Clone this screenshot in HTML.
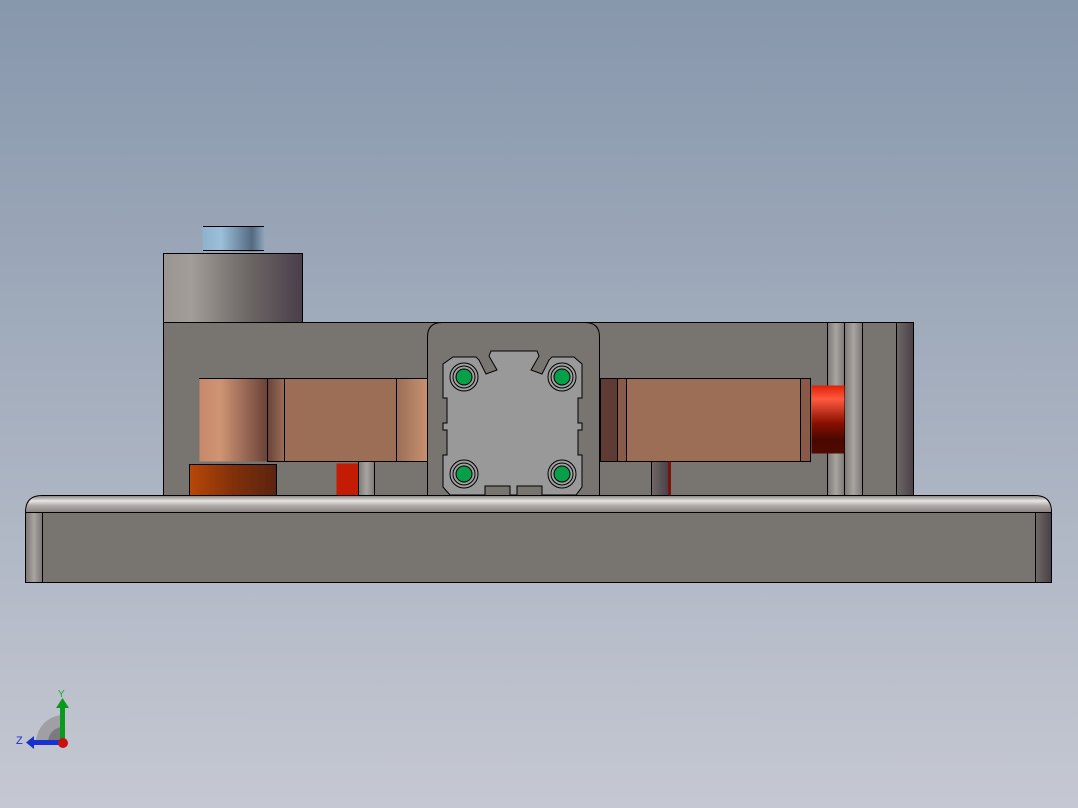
<!DOCTYPE html>
<html><head><meta charset="utf-8"><style>html,body{margin:0;padding:0;width:1078px;height:808px;overflow:hidden}</style></head>
<body>
<svg width="1078" height="808" viewBox="0 0 1078 808" xmlns="http://www.w3.org/2000/svg">
<defs>
<linearGradient id="bg" x1="0" y1="0" x2="0" y2="1"><stop offset="0" stop-color="#8797ac"/><stop offset="1" stop-color="#c5c8d2"/></linearGradient>
<linearGradient id="cyl" x1="0" x2="1"><stop offset="0" stop-color="#9a9591"/><stop offset=".2" stop-color="#a29d98"/><stop offset=".6" stop-color="#6e6866"/><stop offset="1" stop-color="#4a3e4a"/></linearGradient>
<linearGradient id="blue" x1="0" x2="1"><stop offset="0" stop-color="#8fb2cc"/><stop offset=".3" stop-color="#9bbfda"/><stop offset=".8" stop-color="#546a82"/><stop offset="1" stop-color="#8fa6bb"/></linearGradient>
<linearGradient id="cop1" x1="0" x2="1"><stop offset="0" stop-color="#c68a6a"/><stop offset=".3" stop-color="#d09474"/><stop offset="1" stop-color="#6a4238"/></linearGradient>
<linearGradient id="cop2" x1="0" x2="1"><stop offset="0" stop-color="#9b6e55"/><stop offset="1" stop-color="#c89170"/></linearGradient>
<linearGradient id="cop3" x1="0" x2="1"><stop offset="0" stop-color="#6a4238"/><stop offset="1" stop-color="#9b6e55"/></linearGradient>
<linearGradient id="org" x1="0" x2="1"><stop offset="0" stop-color="#b84808"/><stop offset=".5" stop-color="#82300a"/><stop offset="1" stop-color="#5a2410"/></linearGradient>
<linearGradient id="red" x1="0" y1="0" x2="0" y2="1"><stop offset="0" stop-color="#e02008"/><stop offset=".2" stop-color="#ff5a40"/><stop offset=".55" stop-color="#8a1000"/><stop offset=".8" stop-color="#480800"/><stop offset="1" stop-color="#500a00"/></linearGradient>
<linearGradient id="rod" x1="0" x2="1"><stop offset="0" stop-color="#7d7875"/><stop offset=".5" stop-color="#a8a4a0"/><stop offset="1" stop-color="#7d7875"/></linearGradient>
<linearGradient id="dark" x1="0" x2="1"><stop offset="0" stop-color="#6e6866"/><stop offset="1" stop-color="#4a4048"/></linearGradient>
<linearGradient id="strip" x1="0" y1="0" x2="0" y2="1"><stop offset="0" stop-color="#8a8582"/><stop offset=".3" stop-color="#e8e6e4"/><stop offset=".6" stop-color="#b0aba8"/><stop offset="1" stop-color="#8a8582"/></linearGradient>
</defs>
<rect width="1078" height="808" fill="url(#bg)"/>
<g stroke="#000" stroke-width="1">
<rect x="163.5" y="253.5" width="139" height="69" fill="url(#cyl)"/>
<rect x="202.5" y="226.5" width="62" height="25" fill="url(#blue)" stroke="none"/>
<line x1="203" y1="226.5" x2="264" y2="226.5"/><line x1="203" y1="250.5" x2="264" y2="250.5"/>
<rect x="163.5" y="322.5" width="750" height="173" fill="#787470"/>
<rect x="827.5" y="322.5" width="17" height="173" fill="url(#rod)"/>
<rect x="844.5" y="322.5" width="18" height="173" fill="url(#rod)"/>
<rect x="896.5" y="322.5" width="17" height="173" fill="url(#dark)"/>
<rect x="199.5" y="378.5" width="68" height="83" fill="url(#cop1)" stroke="none"/>
<rect x="267.5" y="378.5" width="17" height="83" fill="url(#cop3)"/>
<rect x="284.5" y="378.5" width="112" height="83" fill="#9b6e55"/>
<rect x="396.5" y="378.5" width="31" height="83" fill="url(#cop2)"/>
<line x1="199" y1="378.5" x2="268" y2="378.5"/>
<rect x="189.5" y="464.5" width="87" height="31" fill="url(#org)"/>
<rect x="336.5" y="463.5" width="22" height="32" fill="#c41c04" stroke="none"/>
<rect x="358.5" y="461.5" width="16" height="34" fill="url(#rod)"/>
<rect x="600.5" y="378.5" width="17" height="83" fill="#5f3b33"/>
<rect x="617.5" y="378.5" width="9" height="83" fill="#8a5a48"/>
<rect x="626.5" y="378.5" width="174" height="83" fill="#9b6e55"/>
<rect x="800.5" y="378.5" width="10" height="83" fill="#8a5a48"/>
<rect x="811.5" y="385.5" width="33" height="68" fill="url(#red)" stroke="none"/>
<rect x="651.5" y="461.5" width="17" height="34" fill="url(#dark)"/>
<rect x="668" y="462" width="3" height="33" fill="#7a1408" stroke="none"/>
<path d="M427.5 495 V337 Q427.5 322.5 442 322.5 H585 Q599.5 322.5 599.5 337 V495" fill="#787470"/>
<path d="M453 357 H476 L479 360 L486 374 L497 370 L489 356 L491 351 H537 L539 356 L531 370 L542 374 L549 360 L552 357 H574 L582 364 V398 H578 V423 H582 V430 H578 V455 H582 V487 L576 495 H542 V486 H517 V495 H510 V486 H485 V495 H450 L443 487 V455 H447 V430 H443 V423 H447 V398 H443 V364 Z" fill="#999999"/>
</g>
<g stroke="#000" stroke-width="1">
<g fill="#a0a0a0"><circle cx="464" cy="377" r="14"/><circle cx="562" cy="377" r="14"/><circle cx="464" cy="474" r="14"/><circle cx="562" cy="474" r="14"/></g>
<g fill="none"><circle cx="464" cy="377" r="11"/><circle cx="562" cy="377" r="11"/><circle cx="464" cy="474" r="11"/><circle cx="562" cy="474" r="11"/></g>
<g fill="#06a048"><circle cx="464" cy="377" r="8"/><circle cx="562" cy="377" r="8"/><circle cx="464" cy="474" r="8"/><circle cx="562" cy="474" r="8"/></g>
<path d="M25.5 582.5 V512 Q25.5 495.5 42 495.5 H1035 Q1051.5 495.5 1051.5 512 V582.5 Z" fill="#787470"/>
<path d="M42 496 H1035 Q1050 496 1051 511 V512 H26 V511 Q27 496 42 496 Z" fill="url(#strip)" stroke="none"/>
<line x1="26" y1="512.5" x2="1051" y2="512.5"/>
<path d="M42.5 512 V582" /><path d="M1035.5 512 V582"/>
<rect x="26" y="513" width="16" height="69" fill="url(#rod)" stroke="none"/>
<rect x="1036" y="513" width="15" height="69" fill="url(#dark)" stroke="none"/>
</g>
<path d="M36 742 A28 28 0 0 1 63 715 V742 Z" fill="#a0a0a4"/>
<path d="M48 742 A15 15 0 0 1 63 727 V742 Z" fill="#7a7a80"/>
<rect x="60" y="707" width="5" height="35" fill="#0a9a20"/>
<polygon points="56,708 62.5,698 69,708" fill="#0a9a20"/>
<rect x="33" y="740" width="30" height="5" fill="#1830d0"/>
<polygon points="34,736 26,742.5 34,749" fill="#1830d0"/>
<circle cx="63" cy="743" r="5" fill="#c81010"/>
<text x="58" y="697" font-family="Liberation Sans, sans-serif" font-size="10" fill="#10b030">Y</text>
<text x="16" y="744" font-family="Liberation Sans, sans-serif" font-size="11" fill="#1830d0">Z</text>
</svg>
</body></html>
